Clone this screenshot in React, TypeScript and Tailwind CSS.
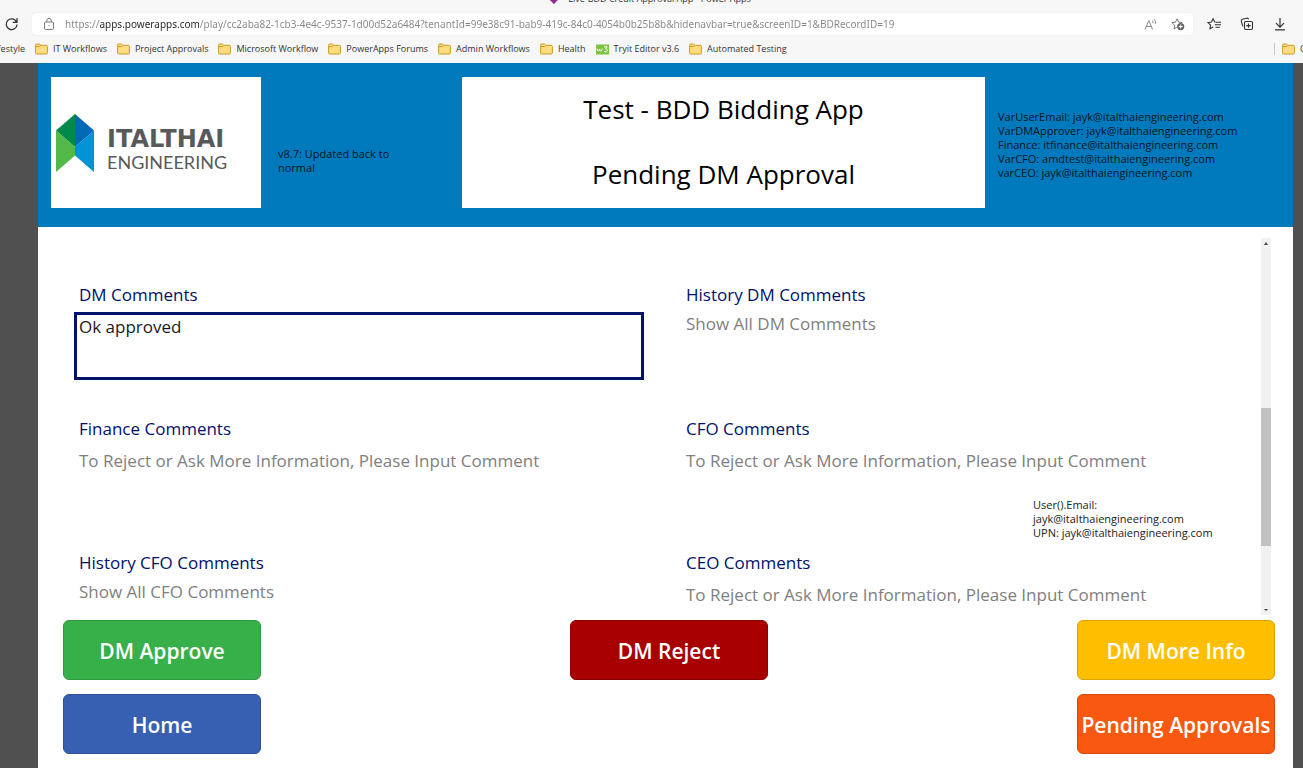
import React from "react";

const FOLDERS_LEFT = ["IT Workflows", "Project Approvals", "Microsoft Workflow", "PowerApps Forums", "Admin Workflows", "Health"];

function FolderIcon() {
  return (
    <svg className="h-3 w-[13px] shrink-0" viewBox="0 0 13 12" fill="none" aria-hidden="true">
      <path d="M.6 2.2q0-1.2 1.2-1.2h2.6l1.4 1.3h5.4q1.2 0 1.2 1.2v6.3q0 1.2-1.2 1.2H1.8q-1.2 0-1.2-1.2z" fill="#ffdc80" stroke="#c99a26" />
      <path d="M1 3.6h3.4l1.4-1.2" stroke="#c99a26" />
    </svg>
  );
}

function Bookmark({ label, children }: { label: string; children?: React.ReactNode }) {
  return (
    <a href="#" className="flex shrink-0 items-center gap-[5px] whitespace-nowrap">
      {children ?? <FolderIcon />}
      {label}
    </a>
  );
}

function BrowserChrome() {
  return (
    <div className="overflow-hidden bg-[#f7f7f7] font-['Noto_Sans',sans-serif] text-[#333]">
      <div className="flex h-[13px] items-start justify-center gap-2 overflow-hidden pr-1 font-['Open_Sans',sans-serif] text-[9px] leading-3">
        <svg className="-mt-2 h-3 w-3" viewBox="0 0 12 12" aria-hidden="true">
          <path d="M6 0 12 6 6 12 0 6z" fill="#c453b9" />
          <path d="M6 4 9 8 6 12 2 8z" fill="#8a2f8a" />
        </svg>
        <span className="-mt-[7px] whitespace-nowrap">Live-BDD Credit Approval App - Power Apps</span>
      </div>
      <div className="flex h-[22px] items-center pl-1">
        <button aria-label="Refresh" className="w-7 shrink-0">
          <svg className="h-4 w-4" viewBox="0 0 16 16" fill="none" stroke="#333" strokeWidth="1.3" aria-hidden="true">
            <path d="M12.6 6.2A5.4 5.4 0 1 0 13 8.4M13 2.2v4.2H8.8" />
          </svg>
        </button>
        <div className="flex h-[22px] min-w-0 flex-1 items-center rounded-sm bg-white pl-3 shadow-[0_0_2px_#e2e2e2]">
          <svg className="mr-[11px] h-3 w-2.5 shrink-0" viewBox="0 0 10 12" fill="none" stroke="#777" aria-hidden="true">
            <rect x=".5" y="4" width="9" height="7.4" rx="1" />
            <path d="M2.8 4V2.6a2.2 2.2 0 0 1 4.4 0V4" />
            <circle cx="5" cy="7.7" r=".6" fill="#777" stroke="none" />
          </svg>
          <input
            aria-label="Address"
            defaultValue="https://apps.powerapps.com/play/cc2aba82-1cb3-4e4c-9537-1d00d52a6484?tenantId=99e38c91-bab9-419c-84c0-4054b0b25b8b&hidenavbar=true&screenID=1&BDRecordID=19"
            className="min-w-0 flex-1 bg-[linear-gradient(90deg,#858585_34px,#222_34px,#222_134px,#858585_134px)] bg-clip-text text-[10px] leading-4 text-transparent outline-none"
          />
          <button aria-label="Read aloud" className="mr-[13px] shrink-0">
            <svg className="h-[13px] w-[14px]" viewBox="0 0 14 13" fill="none" stroke="#888" aria-hidden="true">
              <path d="M1 11.5 4.8 2.5 8.6 11.5M2.3 8.5h5M8.3 2.5q1 1.2.8 2.8M10.2 1.2q1.8 2 1.4 4.6" />
            </svg>
          </button>
          <button aria-label="Add to favorites" className="mr-2 shrink-0">
            <svg className="h-[14px] w-[14px]" viewBox="0 0 14 14" fill="none" stroke="#777" aria-hidden="true">
              <path d="M5.8 10.2 3 11.8l.6-3.6L1 5.6l3.5-.5L6.1 1.8l1.6 3.3 3.6.5" />
              <circle cx="9.7" cy="9.6" r="3.6" fill="#666" stroke="none" />
              <path d="M9.7 7.6v4M7.7 9.6h4" stroke="#fff" />
            </svg>
          </button>
        </div>
        <div className="flex shrink-0 items-center gap-[19px] pl-[14px] pr-4">
          <button aria-label="Favorites">
            <svg className="h-[14px] w-[14px]" viewBox="0 0 14 14" fill="none" stroke="#333" strokeWidth="1.1" aria-hidden="true">
              <path d="M8.5 5 7.7 4.9 6.1 1.8 4.4 5.1 1 5.6l2.6 2.6L3 11.8l3.2-1.7M8.8 5.3H14M7.8 7.8H14M8.5 10.3H13" />
            </svg>
          </button>
          <button aria-label="Collections">
            <svg className="h-[14px] w-[14px]" viewBox="0 0 14 14" fill="none" stroke="#333" strokeWidth="1.1" aria-hidden="true">
              <rect x="4.5" y="4.5" width="8" height="8" rx="1.2" />
              <path d="M8.5 6.4v4.4M6.3 8.6h4.4M2.8 9.4 1.3 4.2q-.4-1.5 1-1.9l4.6-1.1q1.3-.3 1.7 1.1" />
            </svg>
          </button>
          <button aria-label="Downloads">
            <svg className="h-[14px] w-[14px]" viewBox="0 0 14 14" fill="none" stroke="#333" strokeWidth="1.2" aria-hidden="true">
              <path d="M7 1v9M3 6.2 7 10.2 11 6.2M2 12.8h10" />
            </svg>
          </button>
        </div>
      </div>
      <nav aria-label="Bookmarks" className="flex h-7 items-center gap-[10px] font-['Open_Sans',sans-serif] text-[9px] leading-4">
        <a href="#" className="flex w-[25px] shrink-0 justify-end overflow-hidden">
          Lifestyle
        </a>
        {FOLDERS_LEFT.map((label) => (
          <Bookmark key={label} label={label} />
        ))}
        <Bookmark label="Tryit Editor v3.6">
          <svg className="h-[11px] w-[13px] shrink-0" viewBox="0 0 13 11" fill="none" aria-hidden="true">
            <path d="M0 .5h13v10H0z" fill="#7fc241" />
            <path d="M.8 4.5q.6 2.6 1.5 2.6T3.6 5q.4 2.1 1.2 2.1T6.4 4.5M8 2.8h3.2L9.6 4.8q2 .2 1.8 2-.5 1.7-3.4.8" stroke="#fff" />
          </svg>
        </Bookmark>
        <Bookmark label="Automated Testing" />
        <div className="ml-auto flex w-[29px] shrink-0 gap-[7px] overflow-hidden">
          <span className="h-3 w-px shrink-0 self-center bg-[#c8c8c8]" />
          <Bookmark label="Other favorites" />
        </div>
      </nav>
    </div>
  );
}

function Logo() {
  return (
    <div className="flex h-[131px] w-[210px] shrink-0 items-center gap-[13px] overflow-hidden bg-white pl-[5px] text-[#58595b]">
      <svg className="h-[58px] w-[38px] shrink-0" viewBox="0 0 38 58" aria-hidden="true">
        <path d="M19 0 0 16.5 19 33z" fill="#00894a" />
        <path d="M19 0 38 16.5 19 33z" fill="#0069b4" />
        <path d="M0 16.5 19 33v8.5L0 58z" fill="#52b848" />
        <path d="M38 16.5 19 33v8.5L38 58z" fill="#0093d8" />
      </svg>
      <div className="pt-[14px]">
        <div className="font-['DejaVu_Sans',sans-serif] text-[24px] font-bold leading-6">ITALTHAI</div>
        <div className="font-[Lato,sans-serif] text-[18px] leading-[22px]">ENGINEERING</div>
      </div>
    </div>
  );
}

function AppHeader() {
  return (
    <header className="flex h-[164px] bg-[#007abc] pl-[13px] pt-[14px] text-[11px] leading-[14px] text-[#02141f]">
      <Logo />
      <p className="ml-[17px] w-[184px] shrink-0 pr-14 pt-[70px]">v8.7: Updated back to normal</p>
      <div className="flex h-[131px] min-w-0 flex-1 flex-col bg-white text-center text-[26px] leading-[65px] text-black">
        <h1>Test - BDD Bidding App</h1>
        <h2>Pending DM Approval</h2>
      </div>
      <div className="ml-[13px] w-[295px] shrink-0 pt-[33px]">
        <p>VarUserEmail: jayk@italthaiengineering.com</p>
        <p>VarDMApprover: jayk@italthaiengineering.com</p>
        <p>Finance: itfinance@italthaiengineering.com</p>
        <p>VarCFO: amdtest@italthaiengineering.com</p>
        <p>varCEO: jayk@italthaiengineering.com</p>
      </div>
    </header>
  );
}

const PROMPT = "To Reject or Ask More Information, Please Input Comment";

function CommentField({ id, label, value, children }: { id: string; label: string; value?: string; children?: React.ReactNode }) {
  const frame = value ? "border-[#00126b]" : "border-transparent";
  return (
    <div className="flex h-[134px] flex-col">
      <label htmlFor={id} className="pl-[5px] leading-8 text-[#00126b]">
        {label}
      </label>
      <textarea
        id={id}
        defaultValue={value}
        placeholder={PROMPT}
        className={`mt-px block h-[68px] w-full shrink-0 resize-none overflow-hidden border-3 px-0.5 leading-6 text-[#1a1a1a] outline-none placeholder:text-[#808080] ${frame}`}
      />
      {children}
    </div>
  );
}

function HistoryField({ label, link }: { label: string; link: string }) {
  return (
    <div className="flex h-[134px] flex-col items-start pl-[5px]">
      <h3 className="leading-8 text-[#00126b]">{label}</h3>
      <a href="#" className="leading-[26px] text-[#808080]">
        {link}
      </a>
    </div>
  );
}

function ScrollTrack() {
  return (
    <div className="flex w-2.5 shrink-0 flex-col items-center bg-[#f1f1f1]" aria-hidden="true">
      <svg className="h-2.5 w-2.5" viewBox="0 0 10 10">
        <path d="M3 7 5 4 7 7z" fill="#444" />
      </svg>
      <div className="mt-40 h-[138px] w-full bg-[#c1c1c1]" />
      <svg className="mt-auto h-2.5 w-2.5" viewBox="0 0 10 10">
        <path d="M3 4 5 6 7 4z" fill="#444" />
      </svg>
    </div>
  );
}

function ActionButton({ label, tone }: { label: string; tone: string }) {
  return (
    <button className={`h-[60px] w-[198px] shrink-0 whitespace-nowrap rounded-md border pt-[3px] text-[21px] font-semibold text-white ${tone}`}>
      {label}
    </button>
  );
}

export default function App() {
  return (
    <div className="flex min-h-screen flex-col">
      <BrowserChrome />
      <div className="flex flex-1 bg-[#505050] pl-[38px] pr-2.5">
        <main className="min-w-0 flex-1 bg-white font-['Open_Sans',sans-serif]">
          <AppHeader />
          <section className="mt-[11px] flex h-[377px] overflow-hidden pr-[22px]">
            <div className="grid min-w-0 flex-1 grid-cols-2 content-start gap-x-[37px] overflow-hidden pl-9 pr-[10px] pt-[41px] text-[17px]">
              <CommentField id="dm" label="DM Comments" value="Ok approved" />
              <HistoryField label="History DM Comments" link="Show All DM Comments" />
              <CommentField id="finance" label="Finance Comments" />
              <CommentField id="cfo" label="CFO Comments">
                <p className="-mt-4 ml-auto w-[218px] shrink-0 text-[11px] leading-[14px] text-[#222]">
                  User().Email:
                  <br />
                  jayk@italthaiengineering.com
                  <br />
                  UPN: jayk@italthaiengineering.com
                </p>
              </CommentField>
              <HistoryField label="History CFO Comments" link="Show All CFO Comments" />
              <CommentField id="ceo" label="CEO Comments" />
            </div>
            <ScrollTrack />
          </section>
          <div className="flex flex-col gap-[14px] pb-3 pl-[25px] pr-[18px] pt-[5px]">
            <div className="flex justify-between">
              <ActionButton label="DM Approve" tone="bg-[#38b04a] border-[#2d983d]" />
              <ActionButton label="DM Reject" tone="bg-[#a80000] border-[#8c0000]" />
              <ActionButton label="DM More Info" tone="bg-[#ffbf00] border-[#d9a300]" />
            </div>
            <div className="flex justify-between">
              <ActionButton label="Home" tone="bg-[#3860b2] border-[#2d4f96]" />
              <ActionButton label="Pending Approvals" tone="bg-[#f8580f] border-[#d3480a]" />
            </div>
          </div>
        </main>
      </div>
    </div>
  );
}
